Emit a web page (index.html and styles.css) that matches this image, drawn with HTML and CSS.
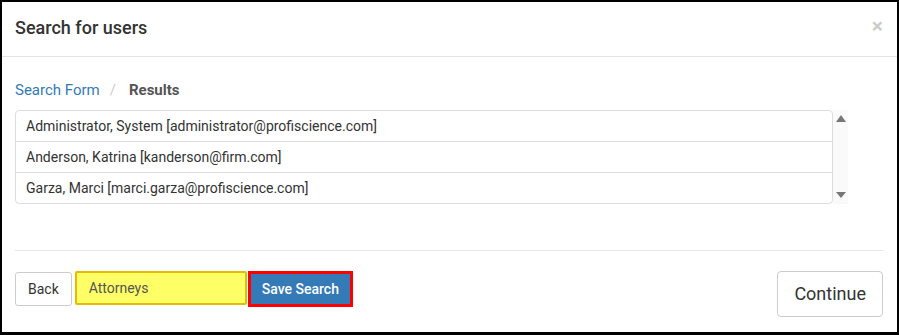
FILE: index.html
```html
<!DOCTYPE html>
<html lang="en">
	<head>
		<meta charset="utf-8">
		<title>Search for users</title>
		<link rel="stylesheet" href="styles.css">
	</head>
	<body>
		<div class="modal">
			<div class="modal-header">
				<h4 class="modal-title">Search for users</h4>
				<button class="close">&times;</button>
			</div>
			<div class="modal-body">
				<ol class="crumbs">
					<li><a href="#">Search Form</a></li>
					<li class="active">Results</li>
				</ol>
				<div class="results">
					<ul class="list">
						<li>Administrator, System [administrator@profiscience.com]</li>
						<li>Anderson, Katrina [kanderson@firm.com]</li>
						<li>Garza, Marci [marci.garza@profiscience.com]</li>
					</ul>
					<div class="scroll">
						<span class="arrow up"></span>
						<span class="arrow down"></span>
					</div>
				</div>
			</div>
			<div class="modal-footer">
				<button class="btn">Back</button>
				<input class="name" type="text" value="Attorneys">
				<span class="mark"><button class="btn primary">Save Search</button></span>
				<button class="btn big">Continue</button>
			</div>
		</div>
	</body>
</html>
```

FILE: styles.css
```css
html,body{
	margin:0;
	background:#fff;
}
body{
	font-family:Roboto,'Helvetica Neue',Arial,sans-serif;
	font-size:14px;
	line-height:20px;
	color:#333;
}
.modal{
	box-sizing:border-box;
	width:899px;
	height:335px;
	border:2px solid #000;
	border-bottom-width:3px;
	background:#fff;
}
.modal-header{
	display:flex;
	align-items:center;
	justify-content:space-between;
	height:54px;
	padding:0 14px 0 13px;
	border-bottom:1px solid #e5e5e5;
}
.modal-title{
	margin:0 0 2px 0;
	font-size:18px;
	font-weight:500;
	line-height:24px;
	color:#333;
}
.close{
	padding:0;
	margin:0 0 6px 0;
	border:0;
	background:none;
	font-family:inherit;
	font-size:21px;
	font-weight:bold;
	line-height:20px;
	color:#000;
	opacity:.2;
	cursor:pointer;
}
.modal-body{
	padding:23px 14px 46px 13px;
}
.crumbs{
	display:flex;
	list-style:none;
	margin:0 0 10px 0;
	padding:0;
	font-size:15px;
}
.crumbs a{
	color:#337ab7;
	text-decoration:none;
}
.crumbs li+li:before{
	content:'/';
	color:#ccc;
	padding:0 13px 0 10px;
	font-weight:normal;
}
.crumbs .active{
	font-weight:bold;
	color:#555;
}
.results{
	display:flex;
	width:833px;
}
.list{
	flex:1;
	list-style:none;
	margin:0;
	padding:0;
	border:1px solid #ddd;
	border-radius:4px;
}
.list li{
	padding:5px 10px;
	border-top:1px solid #ddd;
}
.list li:first-child{
	border-top:0;
}
.scroll{
	display:flex;
	flex-direction:column;
	justify-content:space-between;
	align-items:center;
	width:15px;
	padding:5px 0 5px 0;
	background:#fafafa;
	box-sizing:border-box;
}
.arrow{
	width:0;
	height:0;
	border-left:5px solid transparent;
	border-right:5px solid transparent;
}
.arrow.up{
	border-bottom:7px solid #777;
}
.arrow.down{
	border-top:6px solid #777;
	margin-bottom:1px;
}
.modal-footer{
	display:flex;
	align-items:flex-start;
	margin:0 14px 0 13px;
	padding:20px 0 15px 0;
	border-top:1px solid #e5e5e5;
}
.btn{
	box-sizing:border-box;
	height:34px;
	padding:6px 12px;
	margin-top:1px;
	border:1px solid #ccc;
	border-radius:3px;
	background:#fff;
	font-family:inherit;
	font-size:14px;
	line-height:20px;
	color:#333;
	cursor:pointer;
}
.name{
	box-sizing:border-box;
	width:172px;
	height:34px;
	margin:0 1px 0 3px;
	padding:6px 12px;
	border:2px solid #e3bd00;
	border-radius:2px;
	background:#ffff66;
	font-family:inherit;
	font-size:14px;
	color:#555;
	outline:none;
}
.mark{
	display:inline-flex;
	border:3px solid #f00;
}
.btn.primary{
	height:30px;
	margin:0;
	padding:5px 11px;
	border:0;
	border-radius:0;
	background:#337ab7;
	color:#fff;
	font-weight:500;
}
.btn.big{
	height:46px;
	margin:0 0 0 auto;
	padding:10px 16px;
	border-radius:4px;
	font-size:18px;
	line-height:24px;
}
```
